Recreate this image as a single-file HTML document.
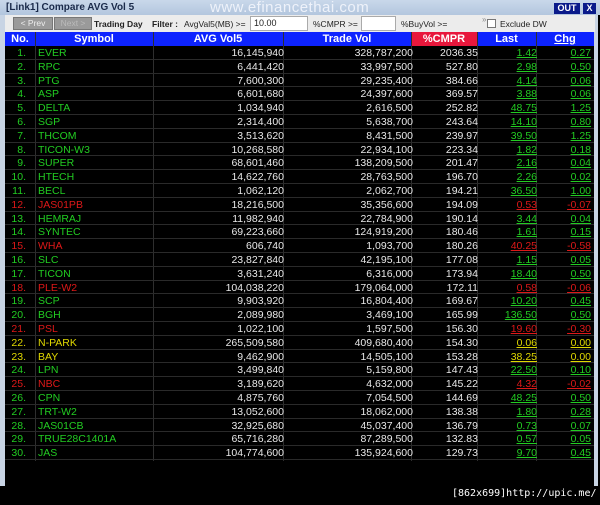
<!DOCTYPE html>
<html><head><meta charset="utf-8"><style>
*{margin:0;padding:0;box-sizing:border-box}
body{width:600px;height:505px;background:#000;font-family:"Liberation Sans",sans-serif;position:relative;overflow:hidden}
#win{position:absolute;left:0;top:0;width:598px;height:486px;background:#000;border-left:5px solid #c8d4e4;border-right:4px solid #c8d4e4}
#title{position:absolute;left:0;top:0;width:600px;height:15px;background:linear-gradient(#c9d8ea,#b3c6de);font-size:10px;font-weight:bold;color:#1a2a4a;padding:2px 0 0 6px}
#wm{position:absolute;left:210px;top:-1px;font-size:15px;color:#eef2fa;letter-spacing:.5px;font-weight:normal}
.tb{position:absolute;top:3px;height:11px;background:#0a1a8a;color:#fff;font-size:9px;font-weight:bold;text-align:center;line-height:11px}
#tool{position:absolute;left:5px;top:15px;width:590px;height:17px;background:#ececec;font-size:8.5px;color:#222}
#tool span{position:absolute;top:4px;white-space:nowrap}
.btn{position:absolute;top:2px;height:13px;background:#9a9a9a;color:#eee;font-size:8.5px;border:1px solid #777;text-align:center;line-height:11px}
.inp{position:absolute;top:1px;height:15px;background:#fff;border:1px solid #aaa;font-size:9px;padding:1px 3px}
#hdr{position:absolute;left:5px;top:32px;width:589px;height:14px;background:#0d23ff;color:#fff;font-size:11px;font-weight:bold}
#hdr div{position:absolute;top:1px;text-align:center}
.r{position:absolute;left:5px;width:589px;height:13.8px;border-bottom:1px solid #2a2a2a;font-size:10.5px;color:#e8e8e8}
.r span{position:absolute;top:1px;white-space:nowrap}
.r span:nth-child(1){right:568px}
.r span:nth-child(2){left:33px}
.r span:nth-child(3){right:310px}
.r span:nth-child(4){right:181px}
.r span:nth-child(5){right:116px}
.r span:nth-child(6){right:57px;text-decoration:underline}
.r span:nth-child(7){right:3px;text-decoration:underline}
.g span:nth-child(1),.g span:nth-child(2),.g span:nth-child(6),.g span:nth-child(7){color:#22cc22}
.d span:nth-child(1),.d span:nth-child(2),.d span:nth-child(6),.d span:nth-child(7){color:#dd1818}
.y span:nth-child(1),.y span:nth-child(2),.y span:nth-child(6),.y span:nth-child(7){color:#e0d800}
.vl{position:absolute;top:32px;height:429px;width:1px;background:#2e2e2e}
#foot{position:absolute;left:452px;top:488px;color:#fff;font-size:10px;font-family:"DejaVu Sans Mono",monospace}
</style></head><body>
<div id="win"></div>
<div id="title">[Link1] Compare AVG Vol 5<span id="wm">www.efinancethai.com</span></div>
<div class="tb" style="left:554px;width:26px">OUT</div>
<div class="tb" style="left:583px;width:13px">X</div>
<div id="tool">
<div class="btn" style="left:8px;width:40px">&lt; Prev</div>
<div class="btn" style="left:49px;width:38px;color:#bbb">Next &gt;</div>
<span style="left:89px;font-weight:bold">Trading Day</span>
<span style="left:147px;font-weight:bold">Filter :</span>
<span style="left:179px">AvgVal5(MB) &gt;=</span>
<div class="inp" style="left:245px;width:58px">10.00</div>
<span style="left:308px">%CMPR &gt;=</span>
<div class="inp" style="left:356px;width:35px"></div>
<span style="left:396px">%BuyVol &gt;=</span>
<span style="left:477px;top:0;font-size:8px;color:#888">»</span>
<div style="position:absolute;left:482px;top:4px;width:9px;height:9px;border:1px solid #777;background:#fff"></div>
<span style="left:495px">Exclude DW</span>
</div>
<div id="hdr">
<div style="left:0;width:30px">No.</div>
<div style="left:30px;width:118px">Symbol</div>
<div style="left:148px;width:130px">AVG Vol5</div>
<div style="left:278px;width:128px">Trade Vol</div>
<div style="left:406px;width:66px;top:0;height:14px;background:#e8173c;padding-top:1px">%CMPR</div>
<div style="left:472px;width:59px">Last</div>
<div style="left:531px;width:58px;text-decoration:underline">Chg</div>
</div>
<div class="vl" style="left:35px"></div><div class="vl" style="left:153px"></div><div class="vl" style="left:283px"></div><div class="vl" style="left:411px"></div><div class="vl" style="left:477px"></div><div class="vl" style="left:536px"></div>
<div class="r g" style="top:46px"><span>1.</span><span>EVER</span><span>16,145,940</span><span>328,787,200</span><span>2036.35</span><span>1.42</span><span>0.27</span></div>
<div class="r g" style="top:59.8px"><span>2.</span><span>RPC</span><span>6,441,420</span><span>33,997,500</span><span>527.80</span><span>2.98</span><span>0.50</span></div>
<div class="r g" style="top:73.6px"><span>3.</span><span>PTG</span><span>7,600,300</span><span>29,235,400</span><span>384.66</span><span>4.14</span><span>0.06</span></div>
<div class="r g" style="top:87.4px"><span>4.</span><span>ASP</span><span>6,601,680</span><span>24,397,600</span><span>369.57</span><span>3.88</span><span>0.06</span></div>
<div class="r g" style="top:101.2px"><span>5.</span><span>DELTA</span><span>1,034,940</span><span>2,616,500</span><span>252.82</span><span>48.75</span><span>1.25</span></div>
<div class="r g" style="top:115px"><span>6.</span><span>SGP</span><span>2,314,400</span><span>5,638,700</span><span>243.64</span><span>14.10</span><span>0.80</span></div>
<div class="r g" style="top:128.8px"><span>7.</span><span>THCOM</span><span>3,513,620</span><span>8,431,500</span><span>239.97</span><span>39.50</span><span>1.25</span></div>
<div class="r g" style="top:142.6px"><span>8.</span><span>TICON-W3</span><span>10,268,580</span><span>22,934,100</span><span>223.34</span><span>1.82</span><span>0.18</span></div>
<div class="r g" style="top:156.4px"><span>9.</span><span>SUPER</span><span>68,601,460</span><span>138,209,500</span><span>201.47</span><span>2.16</span><span>0.04</span></div>
<div class="r g" style="top:170.2px"><span>10.</span><span>HTECH</span><span>14,622,760</span><span>28,763,500</span><span>196.70</span><span>2.26</span><span>0.02</span></div>
<div class="r g" style="top:184px"><span>11.</span><span>BECL</span><span>1,062,120</span><span>2,062,700</span><span>194.21</span><span>36.50</span><span>1.00</span></div>
<div class="r d" style="top:197.8px"><span>12.</span><span>JAS01PB</span><span>18,216,500</span><span>35,356,600</span><span>194.09</span><span>0.53</span><span>-0.07</span></div>
<div class="r g" style="top:211.6px"><span>13.</span><span>HEMRAJ</span><span>11,982,940</span><span>22,784,900</span><span>190.14</span><span>3.44</span><span>0.04</span></div>
<div class="r g" style="top:225.4px"><span>14.</span><span>SYNTEC</span><span>69,223,660</span><span>124,919,200</span><span>180.46</span><span>1.61</span><span>0.15</span></div>
<div class="r d" style="top:239.2px"><span>15.</span><span>WHA</span><span>606,740</span><span>1,093,700</span><span>180.26</span><span>40.25</span><span>-0.58</span></div>
<div class="r g" style="top:253px"><span>16.</span><span>SLC</span><span>23,827,840</span><span>42,195,100</span><span>177.08</span><span>1.15</span><span>0.05</span></div>
<div class="r g" style="top:266.8px"><span>17.</span><span>TICON</span><span>3,631,240</span><span>6,316,000</span><span>173.94</span><span>18.40</span><span>0.50</span></div>
<div class="r d" style="top:280.6px"><span>18.</span><span>PLE-W2</span><span>104,038,220</span><span>179,064,000</span><span>172.11</span><span>0.58</span><span>-0.06</span></div>
<div class="r g" style="top:294.4px"><span>19.</span><span>SCP</span><span>9,903,920</span><span>16,804,400</span><span>169.67</span><span>10.20</span><span>0.45</span></div>
<div class="r g" style="top:308.2px"><span>20.</span><span>BGH</span><span>2,089,980</span><span>3,469,100</span><span>165.99</span><span>136.50</span><span>0.50</span></div>
<div class="r d" style="top:322px"><span>21.</span><span>PSL</span><span>1,022,100</span><span>1,597,500</span><span>156.30</span><span>19.60</span><span>-0.30</span></div>
<div class="r y" style="top:335.8px"><span>22.</span><span>N-PARK</span><span>265,509,580</span><span>409,680,400</span><span>154.30</span><span>0.06</span><span>0.00</span></div>
<div class="r y" style="top:349.6px"><span>23.</span><span>BAY</span><span>9,462,900</span><span>14,505,100</span><span>153.28</span><span>38.25</span><span>0.00</span></div>
<div class="r g" style="top:363.4px"><span>24.</span><span>LPN</span><span>3,499,840</span><span>5,159,800</span><span>147.43</span><span>22.50</span><span>0.10</span></div>
<div class="r d" style="top:377.2px"><span>25.</span><span>NBC</span><span>3,189,620</span><span>4,632,000</span><span>145.22</span><span>4.32</span><span>-0.02</span></div>
<div class="r g" style="top:391px"><span>26.</span><span>CPN</span><span>4,875,760</span><span>7,054,500</span><span>144.69</span><span>48.25</span><span>0.50</span></div>
<div class="r g" style="top:404.8px"><span>27.</span><span>TRT-W2</span><span>13,052,600</span><span>18,062,000</span><span>138.38</span><span>1.80</span><span>0.28</span></div>
<div class="r g" style="top:418.6px"><span>28.</span><span>JAS01CB</span><span>32,925,680</span><span>45,037,400</span><span>136.79</span><span>0.73</span><span>0.07</span></div>
<div class="r g" style="top:432.4px"><span>29.</span><span>TRUE28C1401A</span><span>65,716,280</span><span>87,289,500</span><span>132.83</span><span>0.57</span><span>0.05</span></div>
<div class="r g" style="top:446.2px"><span>30.</span><span>JAS</span><span>104,774,600</span><span>135,924,600</span><span>129.73</span><span>9.70</span><span>0.45</span></div>
<div id="foot">[862x699]http://upic.me/</div>
</body></html>
